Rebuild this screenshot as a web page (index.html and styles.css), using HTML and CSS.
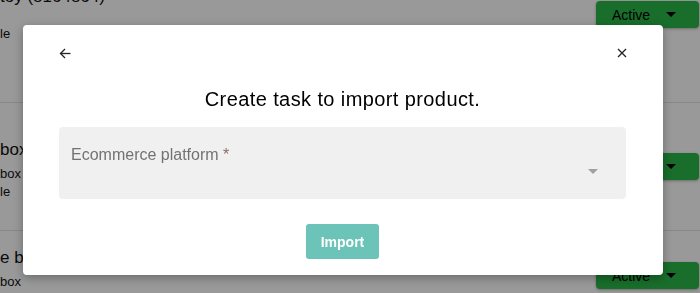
FILE: index.html
```html
<!DOCTYPE html>
<html lang="en">
<head>
    <meta charset="UTF-8">
    <meta name="viewport" content="width=device-width, initial-scale=1.0">
    <title>Products - Import</title>
    <link rel="stylesheet" href="styles.css">
</head>
<body>

    <!-- Product list behind the dialog -->
    <section class="product-list">
        <div class="product-row row-first">
            <div class="product-text">
                <p class="product-name">toy (8164864)</p>
                <p class="product-meta meta-gap">le</p>
            </div>
            <button class="status-button" type="button">Active <span class="caret"></span></button>
        </div>
        <div class="product-row row-second">
            <div class="product-text">
                <p class="product-name">box</p>
                <p class="product-meta">box</p>
                <p class="product-meta">le</p>
            </div>
            <button class="status-button" type="button">Active <span class="caret"></span></button>
        </div>
        <div class="product-row row-third">
            <div class="product-text">
                <p class="product-name">e box</p>
                <p class="product-meta">box</p>
            </div>
            <button class="status-button" type="button">Active <span class="caret"></span></button>
        </div>
    </section>

    <div class="backdrop"></div>

    <div class="dialog">
        <div class="dialog-header">
            <button class="icon-button" type="button" aria-label="Back">
                <svg width="12" height="11" viewBox="0 0 12 11" fill="none" stroke="#222" stroke-width="1.3">
                    <path d="M11.5 5.5H1.5"/>
                    <path d="M6 1L1.5 5.5L6 10"/>
                </svg>
            </button>
            <button class="icon-button" type="button" aria-label="Close">
                <svg width="10" height="10" viewBox="0 0 10 10" fill="none" stroke="#222" stroke-width="1.3">
                    <path d="M1 1L9 9M9 1L1 9"/>
                </svg>
            </button>
        </div>

        <h2 class="dialog-title">Create task to import product.</h2>

        <div class="select-field">
            <label class="select-label">Ecommerce platform <span class="required">*</span></label>
            <div class="select-value">
                <span class="select-caret"></span>
            </div>
        </div>

        <div class="dialog-actions">
            <button class="import-button" type="button">Import</button>
        </div>
    </div>

</body>
</html>
```

FILE: styles.css
```css
/* Basic Styles */
body {
    margin: 0;
    font-family: "Liberation Sans", Arial, sans-serif;
    background-color: #fff;
    color: #111;
    overflow: hidden;
}

p {
    margin: 0;
}

/* Product list */
.product-list {
    margin-top: -20px;
}

.product-row {
    display: flex;
    justify-content: space-between;
    align-items: flex-start;
    border-bottom: 1px solid #e2e2e2;
}

.row-first {
    height: 122px;
}

.row-first .product-text {
    padding-top: 7px;
}

.row-first .status-button {
    margin-top: 21px;
}

.row-second {
    height: 127px;
}

.row-second .product-text {
    padding-top: 37px;
}

.row-second .status-button {
    margin-top: 50px;
}

.row-third {
    height: 80px;
}

.row-third .product-text {
    padding-top: 17px;
}

.row-third .status-button {
    margin-top: 31px;
}

.product-name {
    font-size: 17px;
    line-height: 20px;
    margin-bottom: 5px;
}

.product-meta {
    font-size: 13px;
    line-height: 18px;
}

.meta-gap {
    margin-top: 18px;
}

.status-button {
    width: 103px;
    height: 27px;
    margin-right: 1px;
    background-color: #2bb749;
    color: #000;
    border: none;
    border-radius: 4px;
    font-family: inherit;
    font-size: 14px;
    display: flex;
    align-items: center;
    padding: 0 0 0 16px;
    box-shadow: 0 1px 3px rgba(0, 0, 0, 0.3);
}

.caret {
    width: 0;
    height: 0;
    margin-left: 16px;
    border-left: 5px solid transparent;
    border-right: 5px solid transparent;
    border-top: 5px solid #000;
}

/* Dialog */
.backdrop {
    position: fixed;
    inset: 0;
    background-color: rgba(0, 0, 0, 0.4);
}

.dialog {
    position: fixed;
    left: 23px;
    top: 25px;
    width: 567px;
    height: 216px;
    padding: 18px 37px 16px 36px;
    background-color: #fff;
    border-radius: 4px;
    box-shadow: 0 3px 10px rgba(0, 0, 0, 0.3);
}

.dialog-header {
    display: flex;
    justify-content: space-between;
    align-items: center;
    height: 20px;
}

.icon-button {
    background: none;
    border: none;
    padding: 0;
    display: flex;
    align-items: center;
    cursor: pointer;
}

.icon-button:last-child {
    margin-right: -1px;
}

.dialog-title {
    margin: 24px 0 0;
    font-size: 20px;
    line-height: 24px;
    font-weight: normal;
    letter-spacing: 0.4px;
    text-align: center;
    color: #000;
}

.select-field {
    margin-top: 16px;
    height: 72px;
    box-sizing: border-box;
    padding: 19px 28px 0 12px;
    background-color: #f0f0f0;
    border-radius: 4px;
}

.select-label {
    display: block;
    font-size: 16px;
    line-height: 18px;
    color: #727272;
}

.required {
    color: #8f6a6a;
}

.select-value {
    display: flex;
    justify-content: flex-end;
    margin-top: 5px;
}

.select-caret {
    width: 0;
    height: 0;
    border-left: 5px solid transparent;
    border-right: 5px solid transparent;
    border-top: 5px solid #a0a0a0;
}

.dialog-actions {
    display: flex;
    justify-content: center;
    margin-top: 25px;
}

.import-button {
    width: 73px;
    height: 35px;
    background-color: #6cc3b7;
    color: #fff;
    font-family: inherit;
    font-size: 14px;
    font-weight: bold;
    border: none;
    border-radius: 3px;
    cursor: pointer;
}
```
